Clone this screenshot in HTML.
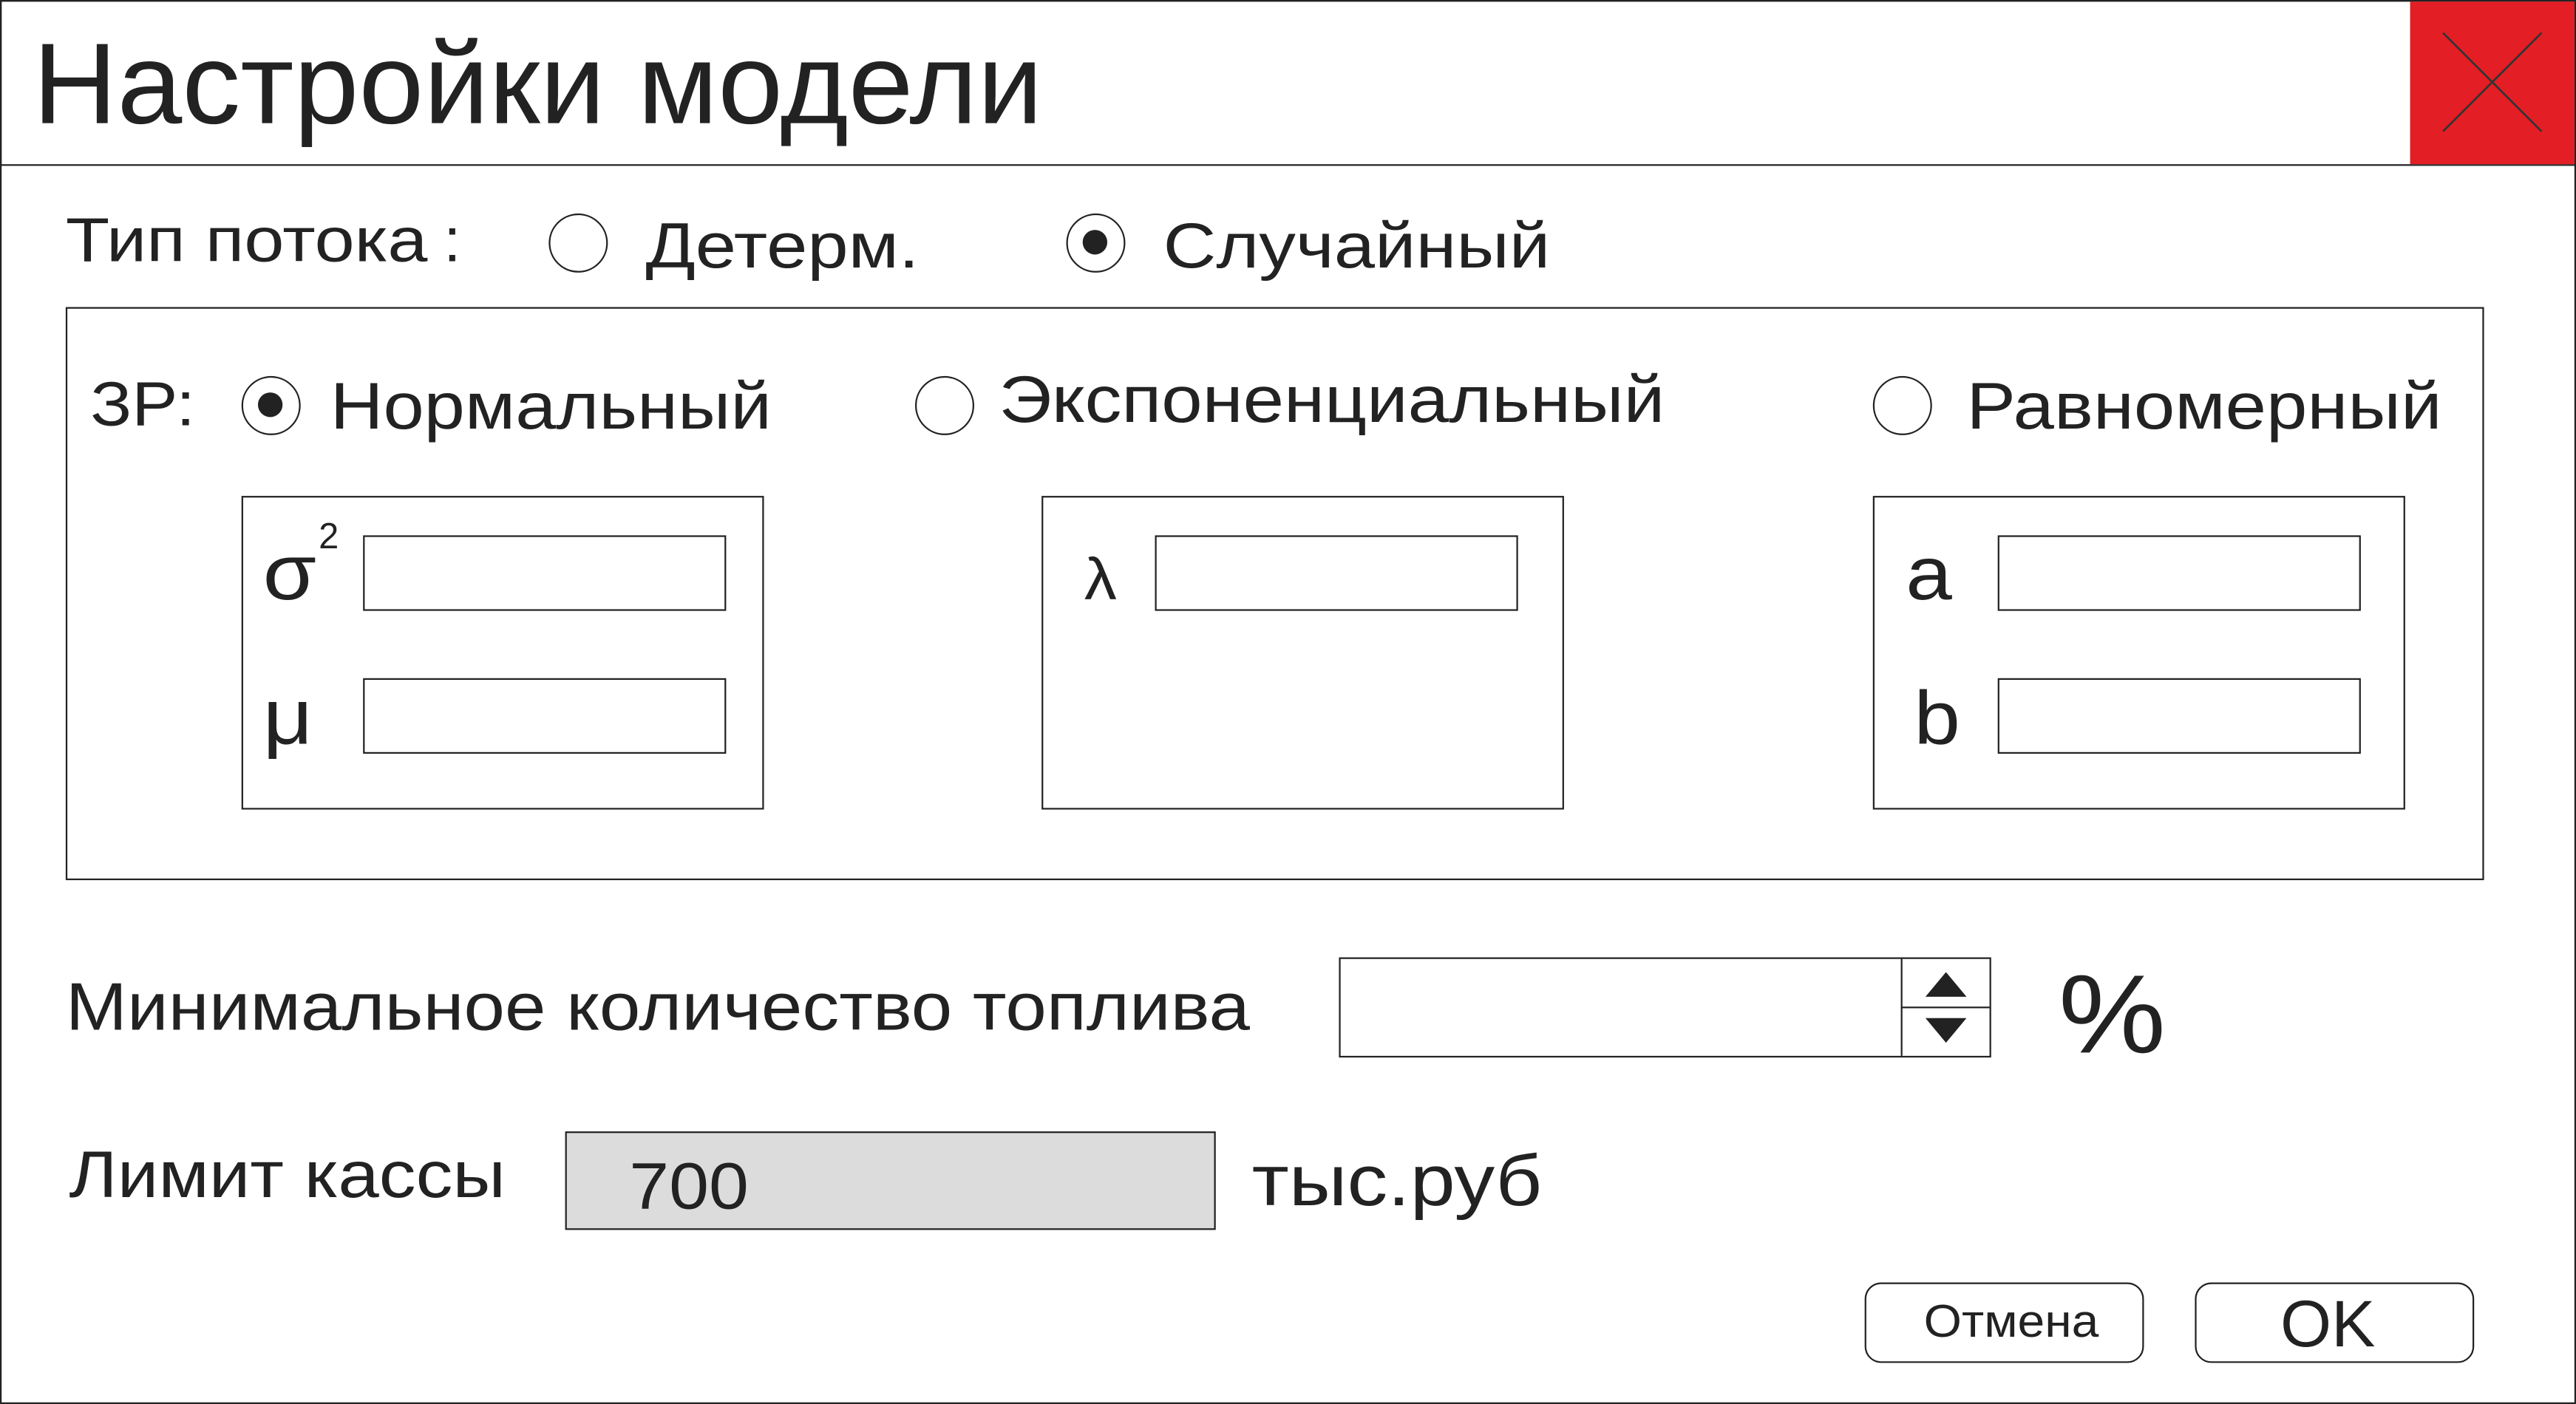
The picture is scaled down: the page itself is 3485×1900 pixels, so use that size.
<!DOCTYPE html>
<html><head><meta charset="utf-8"><style>
html,body{margin:0;padding:0;background:#fff;}
body{width:3485px;height:1900px;overflow:hidden;}
#w{position:absolute;left:0;top:0;width:1568px;height:855px;transform:scale(2.2226,2.2222);transform-origin:0 0;font-family:"Liberation Sans",sans-serif;color:#222;}
.t{position:absolute;line-height:1;white-space:nowrap;transform-origin:0 0;}
.b{position:absolute;border:1px solid #222;box-sizing:border-box;}
.r{position:absolute;width:36px;height:36px;border:1.5px solid #222;border-radius:50%;box-sizing:border-box;background:#fff;}
.r.on::after{content:"";position:absolute;left:9px;top:9px;width:15px;height:15px;border-radius:50%;background:#222;}
</style></head><body><div id="w">
<div class="b" style="left:0;top:0;width:1568px;height:855px;"></div>
<div class="b" style="left:0;top:0;width:1568px;height:101px;"></div>
<div style="position:absolute;left:1467px;top:1px;width:100px;height:99px;background:#e31e24;"></div>
<svg style="position:absolute;left:1467px;top:0" width="100" height="100"><path d="M20 20L80 80M80 20L20 80" stroke="#333" stroke-width="1.2"/></svg>
<div class="t" style="left:20px;top:16px;font-size:70px;transform:scaleX(1.015)">Настройки модели</div>

<div class="t" style="left:40px;top:128px;font-size:38px;transform:scaleX(1.15)">Тип потока</div>
<div class="t" style="left:270px;top:128px;font-size:38px;">:</div>
<div class="r" style="left:334px;top:130px;"></div>
<div class="t" style="left:393px;top:131px;font-size:39px;transform:scaleX(1.146)">Детерм.</div>
<div class="r on" style="left:649px;top:130px;"></div>
<div class="t" style="left:708px;top:131px;font-size:39px;transform:scaleX(1.146)">Случайный</div>

<div class="b" style="left:40px;top:187px;width:1472px;height:349px;"></div>
<div class="t" style="left:55px;top:228px;font-size:38px;transform:scaleX(1.1)">ЗР:</div>
<div class="r on" style="left:147px;top:229px;"></div>
<div class="t" style="left:201px;top:228px;font-size:40px;transform:scaleX(1.117)">Нормальный</div>
<div class="r" style="left:557px;top:229px;"></div>
<div class="t" style="left:608px;top:224px;font-size:40px;transform:scaleX(1.12)">Экспоненциальный</div>
<div class="r" style="left:1140px;top:229px;"></div>
<div class="t" style="left:1197px;top:228px;font-size:40px;transform:scaleX(1.12)">Равномерный</div>

<div class="b" style="left:147px;top:302px;width:318px;height:191px;"></div>
<div class="b" style="left:634px;top:302px;width:318px;height:191px;"></div>
<div class="b" style="left:1140px;top:302px;width:324px;height:191px;"></div>

<div class="b" style="left:221px;top:326px;width:221px;height:46px;"></div>
<div class="b" style="left:221px;top:413px;width:221px;height:46px;"></div>
<div class="b" style="left:703px;top:326px;width:221px;height:46px;"></div>
<div class="b" style="left:1216px;top:326px;width:221px;height:46px;"></div>
<div class="b" style="left:1216px;top:413px;width:221px;height:46px;"></div>

<div class="t" style="left:160px;top:326px;font-size:48px;transform:scaleX(1.1)">σ</div>
<div class="t" style="left:194px;top:316px;font-size:22px;">2</div>
<div class="t" style="left:160px;top:414px;font-size:48px;transform:scaleX(1.1)">μ</div>
<div class="t" style="left:660px;top:335px;font-size:36px;transform:scaleX(1.1)">λ</div>
<div class="t" style="left:1160px;top:326px;font-size:46px;transform:scaleX(1.1)">a</div>
<div class="t" style="left:1165px;top:414px;font-size:46px;transform:scaleX(1.1)">b</div>

<div class="t" style="left:40px;top:593px;font-size:41px;transform:scaleX(1.094)">Минимальное количество топлива</div>
<div class="b" style="left:815px;top:583px;width:397px;height:61px;"></div>
<div style="position:absolute;left:1157px;top:583px;width:1px;height:60px;background:#222;"></div>
<div style="position:absolute;left:1157px;top:613px;width:54px;height:1px;background:#222;"></div>
<svg style="position:absolute;left:1158px;top:584px" width="53" height="59"><path d="M14 23L26.5 8L39 23Z M14 36L26.5 51L39 36Z" fill="#222"/></svg>
<div class="t" style="left:1253px;top:584px;font-size:68px;transform:scaleX(1.08)">%</div>

<div class="t" style="left:42px;top:696px;font-size:40px;transform:scaleX(1.12)">Лимит кассы</div>
<div class="b" style="left:344px;top:689px;width:396px;height:60px;background:#dcdcdc;"></div>
<div class="t" style="left:383px;top:703px;font-size:40px;transform:scaleX(1.09)">700</div>
<div class="t" style="left:762px;top:698px;font-size:44px;transform:scaleX(1.12)">тыс.руб</div>

<div class="b" style="left:1135px;top:781px;width:170px;height:49px;border-radius:10px;"></div>
<div class="t" style="left:1171px;top:791px;font-size:28px;transform:scaleX(1.06)">Отмена</div>
<div class="b" style="left:1336px;top:781px;width:170px;height:49px;border-radius:10px;"></div>
<div class="t" style="left:1388px;top:787px;font-size:40px;">OK</div>
</div></body></html>
